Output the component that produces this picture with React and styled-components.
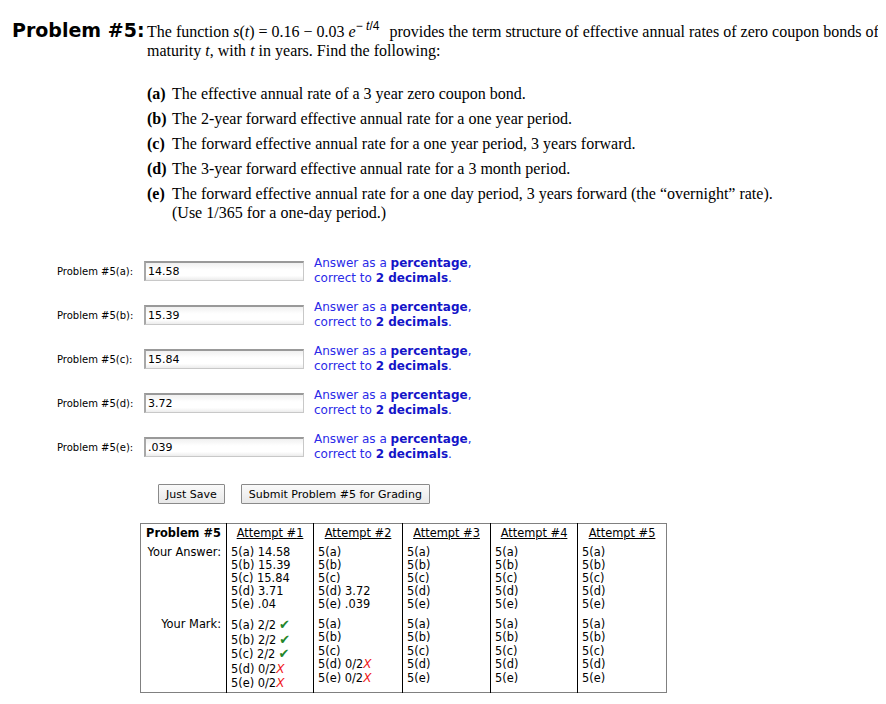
import styled, { createGlobalStyle } from "styled-components";

const GlobalStyle = createGlobalStyle`
  body {
    margin: 8px;
    background: #fff;
    color: #000;
    font-family: "DejaVu Sans", Verdana, sans-serif;
  }
`;

const Page = styled.div`
  width: 878px;
`;

const ProblemHead = styled.div`
  display: flex;
  align-items: flex-start;
  padding-top: 8px;
`;

const Title = styled.div`
  width: 139px;
  padding-left: 4px;
  box-sizing: border-box;
  font-size: 19px;
  font-weight: bold;
  line-height: 28px;
  flex-shrink: 0;
`;

const Statement = styled.div`
  font-family: "Liberation Serif", "Times New Roman", serif;
  font-size: 16px;
  line-height: 19px;
  padding-top: 6px;
`;

const Sup = styled.sup`
  font-family: "Liberation Sans", Arial, sans-serif;
  font-size: 12px;
  vertical-align: 7px;
  line-height: 0;
  margin-right: 6px;
`;

const Parts = styled.div`
  font-family: "Liberation Serif", "Times New Roman", serif;
  font-size: 16px;
  margin: 24px 0 0 139px;
  display: flex;
  flex-direction: column;
  gap: 6px;
`;

const Part = styled.div`
  display: flex;
  line-height: 19px;
`;

const PartTag = styled.b`
  width: 25px;
  flex-shrink: 0;
`;

const Answers = styled.div`
  margin-top: 34px;
  display: flex;
  flex-direction: column;
  gap: 14px;
`;

const AnswerRow = styled.div`
  display: flex;
  align-items: center;
`;

const Label = styled.label`
  width: 136px;
  box-sizing: border-box;
  padding-left: 49px;
  font-size: 10px;
`;

const Field = styled.input`
  width: 160px;
  height: 20px;
  box-sizing: border-box;
  margin: 0 10px 0 0;
  padding: 1px 2px;
  font-family: "DejaVu Sans", Verdana, sans-serif;
  font-size: 11px;
  color: #000;
  border: 1px solid #c8c8c8;
  border-top: 2px solid #999;
  border-left: 2px solid #a8a8a8;
  background: linear-gradient(#f0f0f0, #fff 40%, #fff 75%, #ececec);
  outline: none;
`;

const Hint = styled.div`
  color: #2a2ae8;
  font-size: 12px;
  line-height: 15px;
  & b {
    color: #1414c8;
  }
`;

const Buttons = styled.div`
  display: flex;
  gap: 16px;
  margin: 22px 0 0 150px;
`;

const Button = styled.button`
  height: 20px;
  padding: 0 7px;
  font-family: "DejaVu Sans", Verdana, sans-serif;
  font-size: 11px;
  color: #000;
  background: linear-gradient(#fafafa, #e8e8e8);
  border: 1px solid #8a8a8a;
  border-radius: 1px;
`;

const Attempts = styled.table`
  margin: 19px 0 0 132px;
  width: 527px;
  table-layout: fixed;
  border-collapse: collapse;
  border: 1px solid #808080;
  font-size: 11.4px;
  line-height: 13px;
`;

const Th = styled.th`
  padding: 3px 0 3px;
  border-left: 1px solid #000;
  font-weight: ${(p) => (p.$bold ? "bold" : "normal")};
  text-decoration: ${(p) => (p.$bold ? "none" : "underline")};
  text-align: center;
  white-space: nowrap;
  &:first-child {
    border-left: none;
  }
`;

const Td = styled.td`
  vertical-align: top;
  padding: ${(p) => (p.$top ? "3px" : "6px")} 2px 1px 4px;
  border-left: 1px solid #000;
  text-align: ${(p) => (p.$right ? "right" : "left")};
  &:first-child {
    border-left: none;
    padding-right: 5px;
  }
`;

const Line = styled.div`
  white-space: nowrap;
  line-height: ${(p) => p.$lh || 13}px;
`;

const Check = styled.span`
  color: #23862a;
  font-weight: bold;
  font-size: 13px;
  margin-left: 3px;
`;

const Cross = styled.span`
  color: #f01818;
  font-style: italic;
  font-size: 12px;
`;

const letters = ["a", "b", "c", "d", "e"];

const inputs = ["14.58", "15.39", "15.84", "3.72", ".039"];

const answers = [
  ["14.58", "15.39", "15.84", "3.71", ".04"],
  ["", "", "", "3.72", ".039"],
  ["", "", "", "", ""],
  ["", "", "", "", ""],
  ["", "", "", "", ""],
];

const marks = [
  ["ok", "ok", "ok", "bad", "bad"],
  ["", "", "", "bad", "bad"],
  ["", "", "", "", ""],
  ["", "", "", "", ""],
  ["", "", "", "", ""],
];

const widths = [86, 87, 89, 88, 87, 89];

const Mark = ({ l, v, tall }) => {
  const lh = tall ? 14.6 : 13.4;
  if (v === "ok") {
    return (
      <Line $lh={lh}>
        5({l}) 2/2<Check>✔</Check>
      </Line>
    );
  }
  if (v === "bad") {
    return (
      <Line $lh={lh}>
        5({l}) 0/2<Cross>X</Cross>
      </Line>
    );
  }
  return <Line $lh={lh}>5({l})</Line>;
};

export default function App() {
  return (
    <Page>
      <GlobalStyle />
      <ProblemHead>
        <Title>Problem #5:</Title>
        <Statement>
          The function <i>s</i>(<i>t</i>) = 0.16 − 0.03 <i>e</i>
          <Sup>
            − <i>t</i>/4
          </Sup>{" "}
          provides the term structure of effective annual rates of zero coupon
          bonds of maturity <i>t</i>, with <i>t</i> in years. Find the following:
        </Statement>
      </ProblemHead>

      <Parts>
        <Part>
          <PartTag>(a)</PartTag>
          <span>The effective annual rate of a 3 year zero coupon bond.</span>
        </Part>
        <Part>
          <PartTag>(b)</PartTag>
          <span>The 2-year forward effective annual rate for a one year period.</span>
        </Part>
        <Part>
          <PartTag>(c)</PartTag>
          <span>The forward effective annual rate for a one year period, 3 years forward.</span>
        </Part>
        <Part>
          <PartTag>(d)</PartTag>
          <span>The 3-year forward effective annual rate for a 3 month period.</span>
        </Part>
        <Part>
          <PartTag>(e)</PartTag>
          <span>
            The forward effective annual rate for a one day period, 3 years
            forward (the “overnight” rate).
            <br />
            (Use 1/365 for a one-day period.)
          </span>
        </Part>
      </Parts>

      <Answers>
        {letters.map((l, i) => (
          <AnswerRow key={l}>
            <Label>Problem #5({l}):</Label>
            <Field defaultValue={inputs[i]} />
            <Hint>
              Answer as a <b>percentage</b>,
              <br />
              correct to <b>2 decimals</b>.
            </Hint>
          </AnswerRow>
        ))}
      </Answers>

      <Buttons>
        <Button>Just Save</Button>
        <Button>Submit Problem #5 for Grading</Button>
      </Buttons>

      <Attempts>
        <colgroup>
          {widths.map((w, i) => (
            <col key={i} style={{ width: w }} />
          ))}
        </colgroup>
        <thead>
          <tr>
            <Th $bold>Problem #5</Th>
            {[1, 2, 3, 4, 5].map((n) => (
              <Th key={n}>Attempt #{n}</Th>
            ))}
          </tr>
        </thead>
        <tbody>
          <tr>
            <Td $right $top>Your Answer:</Td>
            {answers.map((col, ci) => (
              <Td key={ci} $top>
                {col.map((v, li) => (
                  <Line key={li}>
                    5({letters[li]}){v ? ` ${v}` : ""}
                  </Line>
                ))}
              </Td>
            ))}
          </tr>
          <tr>
            <Td $right>Your Mark:</Td>
            {marks.map((col, ci) => (
              <Td key={ci}>
                {col.map((v, li) => (
                  <Mark key={li} l={letters[li]} v={v} tall={ci === 0} />
                ))}
              </Td>
            ))}
          </tr>
        </tbody>
      </Attempts>
    </Page>
  );
}
